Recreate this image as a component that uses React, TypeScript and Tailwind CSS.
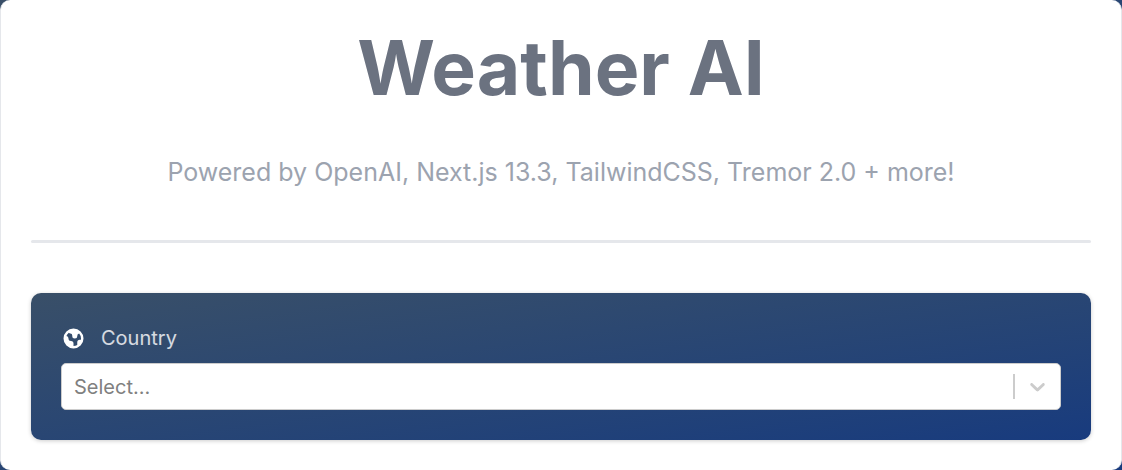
import React from "react";

function Globe() {
  return (
    <svg viewBox="0 0 20 20" fill="currentColor" className="size-[25px] text-white" aria-hidden="true">
      <path fillRule="evenodd" clipRule="evenodd" d="M18 10a8 8 0 11-16 0 8 8 0 0116 0zM4.332 8.027a6.012 6.012 0 011.912-2.706C6.512 5.73 6.974 6 7.5 6A1.5 1.5 0 019 7.5V8a2 2 0 004 0 2 2 0 011.523-1.943A5.977 5.977 0 0116 10c0 .34-.028.675-.083 1H15a2 2 0 00-2 2v2.197A5.973 5.973 0 0110 16v-2a2 2 0 00-2-2 2 2 0 01-2-2 2 2 0 00-1.668-1.973z" />
    </svg>
  );
}

function CountryPicker() {
  return (
    <div className="flex flex-col gap-[10px]">
      <label htmlFor="country" className="flex items-center gap-[15px] text-xl leading-[30px] text-white/80">
        <Globe />
        Country
      </label>
      <div className="flex h-[47px] items-center rounded-[5px] border border-[#cccccc] bg-white">
        <input
          id="country"
          role="combobox"
          aria-expanded="false"
          aria-controls="country-list"
          placeholder="Select..."
          className="min-w-0 flex-1 bg-transparent px-3 text-xl leading-7 text-gray-700 outline-none placeholder:text-[#808080]"
        />
        <span className="h-[25px] w-[2px] bg-[#cccccc]" />
        <button type="button" aria-label="Open country list" className="px-[10px] text-[#cccccc]">
          <svg viewBox="0 0 20 20" fill="currentColor" className="size-[25px]" aria-hidden="true">
            <path d="M4.516 7.548c0.436-0.446 1.043-0.481 1.576 0l3.908 3.747 3.908-3.747c0.533-0.481 1.141-0.446 1.574 0 0.436 0.445 0.408 1.197 0 1.615-0.406 0.418-4.695 4.502-4.695 4.502-0.217 0.223-0.502 0.335-0.787 0.335s-0.57-0.112-0.789-0.335c0 0-4.287-4.084-4.695-4.502s-0.436-1.17 0-1.615z" />
          </svg>
        </button>
      </div>
    </div>
  );
}

export default function App() {
  return (
    <div className="bg-linear-to-br from-[#394f68] to-[#183b7e] font-['Inter',sans-serif]">
      <main className="rounded-[10px] border-x border-[#e5e7eb] bg-white p-[30px]">
        <h1 className="text-center text-[75px] leading-[75px] font-bold text-[#6b7280]">Weather AI</h1>
        <p className="mt-[49px] text-center text-[25px] leading-9 text-[#9ca3af]">
          Powered by OpenAI, Next.js 13.3, TailwindCSS, Tremor 2.0 + more!
        </p>
        <hr className="my-[50px] h-[3px] rounded-sm border-0 bg-[#e5e7eb]" />
        <section className="rounded-[10px] bg-linear-to-br from-[#394f68] to-[#183b7e] p-[30px] shadow-[0_1px_4px_rgba(0,0,0,0.2)]">
          <CountryPicker />
        </section>
      </main>
    </div>
  );
}
